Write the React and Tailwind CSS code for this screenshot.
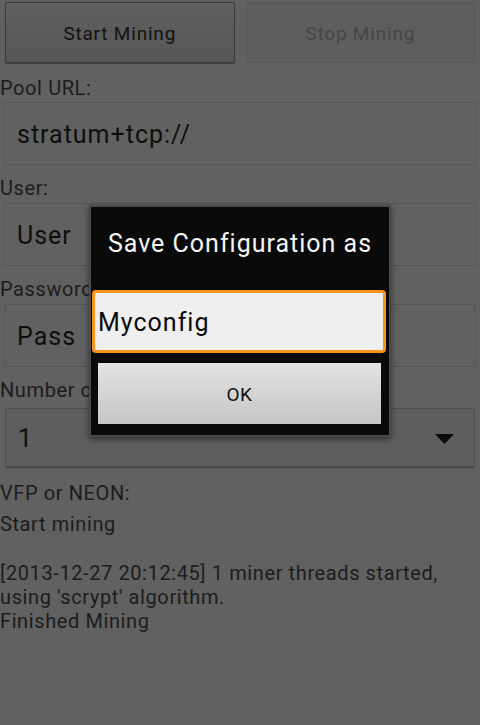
import React from "react";

const Field = ({ value }) => (
  <div className="mx-[4px] h-[63px] border border-[#565656] bg-[#616161] flex items-center pl-[12px] pt-[3px] text-[25px] tracking-[1px] text-[#0e0e0e]">
    {value}
  </div>
);

const Label = ({ children, className = "" }) => (
  <div className={`text-[20px] leading-[24px] tracking-[0.6px] text-[#1c1c1c] ${className}`}>{children}</div>
);

const App = () => {
  return (
    <div
      className="relative w-[480px] h-[725px] bg-[#616161] overflow-hidden"
      style={{ fontFamily: "Roboto, 'Noto Sans', sans-serif" }}
    >
      {/* top buttons */}
      <div className="flex gap-[11px] px-[5px] pt-[2px]">
        <button className="flex-1 h-[61px] pt-[3px] rounded-[2px] border border-[#3b3b3b] bg-gradient-to-b from-[#5f5f5f] to-[#575757] text-[19px] tracking-[0.8px] text-[#121212] shadow-[0_1px_1px_rgba(0,0,0,0.35)]">
          Start Mining
        </button>
        <button className="flex-1 h-[61px] pt-[3px] rounded-[2px] border border-[#575757] bg-[#5e5e5e] text-[19px] tracking-[0.8px] text-[#464646]">
          Stop Mining
        </button>
      </div>

      <Label className="mt-[13px]">Pool URL:</Label>
      <div className="mt-[2px]">
        <Field value="stratum+tcp://" />
      </div>

      <Label className="mt-[11px]">User:</Label>
      <div className="mt-[3px]">
        <Field value="User" />
      </div>

      <Label className="mt-[11px]">Password:</Label>
      <div className="mt-[3px]">
        <Field value="Pass" />
      </div>

      <Label className="mt-[11px]">Number of threads:</Label>
      <div className="mt-[6px] mx-[5px] h-[59px] rounded-[2px] border border-[#4e4e4e] bg-[#5e5e5e] shadow-[0_1px_1px_rgba(0,0,0,0.3)] flex items-center justify-between pl-[12px] pr-[20px] pt-[2px] text-[25px] text-[#0e0e0e]">
        <span>1</span>
        <svg width="19" height="10" viewBox="0 0 19 10">
          <polygon points="0,0 19,0 9.5,10" fill="#0a0a0a" />
        </svg>
      </div>

      <Label className="mt-[14px]">VFP or NEON:</Label>
      <Label className="mt-[7px]">Start mining</Label>
      <Label className="mt-[25px]">
        [2013-12-27 20:12:45] 1 miner threads started,
        <br />
        using 'scrypt' algorithm.
        <br />
        Finished Mining
      </Label>

      {/* dialog */}
      <div className="absolute left-[89px] top-[205px] w-[302px] border-2 border-[#4b4b4b] shadow-[0_2px_6px_rgba(0,0,0,0.5)]">
        <div className="bg-[#0a0a0a] pt-[21px] pb-[11px] flex flex-col">
          <div className="text-center text-[25px] leading-[32px] tracking-[1px] text-[#f5f5f5]">
            Save Configuration as
          </div>
          <div className="mt-[30px] ml-[1px] mr-[3px] h-[63px] rounded-[4px] border-[3px] border-[#f7931e] bg-[#efefef] flex items-center pl-[3px] pt-[3px] text-[25px] tracking-[1px] text-[#0a0a0a]">
            Myconfig
          </div>
          <button className="mt-[10px] ml-[7px] mr-[8px] h-[61px] pt-[3px] bg-gradient-to-b from-[#e3e3e3] to-[#c6c6c6] text-[19px] tracking-[0.5px] text-[#111]">
            OK
          </button>
        </div>
      </div>
    </div>
  );
};

export default App;
